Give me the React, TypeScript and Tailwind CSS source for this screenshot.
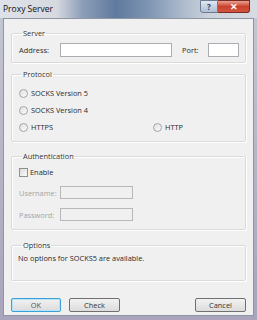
import React from "react";

const font = { fontFamily: '"Open Sans", "Noto Sans", sans-serif' };

function Radio({ label }: { label: string }) {
  return (
    <div className="flex items-center gap-[3px] h-[12px]">
      <span className="w-[9px] h-[9px] rounded-full border border-[#a5a5a5] bg-gradient-to-br from-[#e0e0e0] to-[#fbfbfb]" />
      <span>{label}</span>
    </div>
  );
}

function Group({ title, className, children }: { title: string; className?: string; children: React.ReactNode }) {
  return (
    <fieldset className={"border border-[#dadada] rounded-[2px] shadow-[inset_1px_1px_0_#ffffff,1px_1px_0_#ffffff] mx-[7px] px-[6px] " + (className ?? "")}>
      <legend className="px-[1px] ml-[4px] text-[#333]">{title}</legend>
      {children}
    </fieldset>
  );
}

export default function App() {
  return (
    <div
      className="w-[257px] h-[320px] flex flex-col text-[7.4px] leading-[12px] text-[#2a2a2a] bg-gradient-to-b from-[#c3c8d4] via-[#b9b3c6] to-[#a9a3bc] overflow-hidden"
      style={font}
    >
      <div className="h-[18px] flex items-start justify-between bg-[linear-gradient(90deg,#dfe2e8_0%,#d6d9e0_22%,#8d9fb8_32%,#5f7a9e_45%,#7f95b2_58%,#a9b8cb_70%,#cdd3dc_82%,#d8dbe1_100%)]">
        <span className="ml-[3px] mt-[3px] text-[8.5px] text-[#111]">Proxy Server</span>
        <div className="flex mr-[7px]">
          <div className="w-[18px] h-[13px] rounded-bl-[3px] border border-[#6a7b92] bg-gradient-to-b from-[#dfe7f1] to-[#aebfd3] flex items-center justify-center text-[8px] font-bold text-[#2b3e5c]">?</div>
          <div className="w-[32px] h-[13px] rounded-br-[3px] border border-l-0 border-[#7a2a22] bg-gradient-to-b from-[#e8a093] via-[#c9402e] to-[#d2553f] flex items-center justify-center text-[9px] font-bold text-white">✕</div>
        </div>
      </div>
      <div className="flex-1 mx-[3px] mb-[4px] bg-[#f0f0f0] border border-[#8f96a3] flex flex-col pt-[8px]">
        <Group title="Server" className="pb-[5px]">
          <div className="flex items-center mt-[4px]">
            <span className="ml-[1px] w-[41px]">Address:</span>
            <div className="w-[112px] h-[14px] bg-white border border-[#abadb3]" />
            <span className="ml-[10px] w-[26px]">Port:</span>
            <div className="w-[31px] h-[14px] bg-white border border-[#abadb3]" />
          </div>
        </Group>
        <Group title="Protocol" className="mt-[5px] pb-[8px]">
          <div className="flex flex-col gap-[5px] mt-[7px] ml-[1px]">
            <Radio label="SOCKS Version 5" />
            <Radio label="SOCKS Version 4" />
            <div className="flex">
              <div className="w-[134px]"><Radio label="HTTPS" /></div>
              <Radio label="HTTP" />
            </div>
          </div>
        </Group>
        <Group title="Authentication" className="mt-[8px] pb-[8px]">
          <div className="flex items-center gap-[2px] mt-[4px] ml-[1px]">
            <span className="w-[9px] h-[9px] border border-[#8f8f8f] bg-gradient-to-br from-[#dcdcdc] to-[#fafafa]" />
            <span>Enable</span>
          </div>
          <div className="flex items-center mt-[8px] text-[#a4a4a4]">
            <span className="ml-[1px] w-[41px]">Username:</span>
            <div className="w-[73px] h-[13px] bg-[#f0f0f0] border border-[#b8b8b8]" />
          </div>
          <div className="flex items-center mt-[9px] text-[#a4a4a4]">
            <span className="ml-[1px] w-[41px]">Password:</span>
            <div className="w-[73px] h-[13px] bg-[#f0f0f0] border border-[#b8b8b8]" />
          </div>
        </Group>
        <Group title="Options" className="mt-[9px] pb-[16px]">
          <div className="mt-[1px]">No options for SOCKS5 are available.</div>
        </Group>
        <div className="flex items-center mt-[17px] mx-[7px]">
          <button className="w-[50px] h-[14px] rounded-[2px] border border-[#3c9fd8] bg-gradient-to-b from-[#f2f2f2] to-[#dcdcdc] text-[7.4px] text-[#555] shadow-[inset_0_0_0_1px_#b5e3f7]">OK</button>
          <button className="ml-[8px] w-[51px] h-[14px] rounded-[2px] border border-[#707070] bg-gradient-to-b from-[#f2f2f2] to-[#dcdcdc] text-[7.4px] text-[#333]">Check</button>
          <button className="ml-auto w-[51px] h-[14px] rounded-[2px] border border-[#707070] bg-gradient-to-b from-[#f2f2f2] to-[#dcdcdc] text-[7.4px] text-[#333]">Cancel</button>
        </div>
      </div>
    </div>
  );
}
